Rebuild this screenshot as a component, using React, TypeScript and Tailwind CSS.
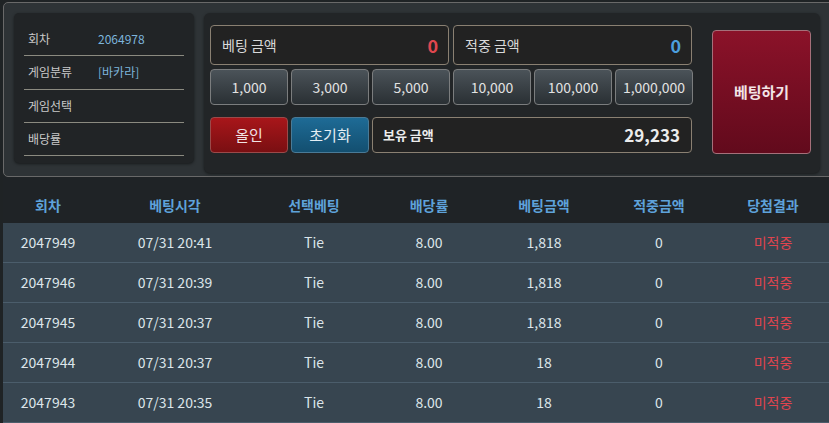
import React from "react";

const font = { fontFamily: '"Noto Sans CJK KR", "Noto Sans", sans-serif' };

const rows = [
  ["2047949", "07/31 20:41", "Tie", "8.00", "1,818", "0", "미적중"],
  ["2047946", "07/31 20:39", "Tie", "8.00", "1,818", "0", "미적중"],
  ["2047945", "07/31 20:37", "Tie", "8.00", "1,818", "0", "미적중"],
  ["2047944", "07/31 20:37", "Tie", "8.00", "18", "0", "미적중"],
  ["2047943", "07/31 20:35", "Tie", "8.00", "18", "0", "미적중"],
];

const headers = ["회차", "베팅시각", "선택베팅", "배당률", "베팅금액", "적중금액", "당첨결과"];

const chips = ["1,000", "3,000", "5,000", "10,000", "100,000", "1,000,000"];

export default function App() {
  return (
    <div className="w-[829px] h-[423px] overflow-hidden bg-[#1f2325] pt-[2px] pl-[3px]" style={font}>
      {/* top box */}
      <div className="h-[175px] w-[840px] rounded-[5px] border border-[#696969] bg-[#2e3336] pl-[10px] pt-[10px] flex gap-[10px]">
        {/* left info panel */}
        <div className="w-[180px] h-[150px] rounded-[5px] bg-[#212426] shadow-[0_1px_3px_rgba(0,0,0,0.5)] px-[10px] pt-[10px]">
          {[
            ["회차", "2064978"],
            ["게임분류", "[바카라]"],
            ["게임선택", ""],
            ["배당률", ""],
          ].map(([l, v]) => (
            <div key={l} className="h-[33.3px] border-b border-[#8b8a80] flex items-center text-[12px]">
              <span className="w-[74px] pl-[4px] text-[#c9c9c9]">{l}</span>
              <span className="text-[#7db5dc]">{v}</span>
            </div>
          ))}
        </div>
        {/* middle panel */}
        <div className="w-[616px] h-[160px] rounded-[6px] bg-[#222527] shadow-[0_1px_3px_rgba(0,0,0,0.5)] pl-[6px] pt-[12px] flex">
          <div className="w-[483px] flex flex-col">
            <div className="flex gap-[4px] h-[40px]">
              <div className="w-[239px] rounded-[4px] border border-[#8a8072] bg-[#222222] flex items-center justify-between pl-[11px] pr-[10px]">
                <span className="text-[14px] text-[#d9d9d9]">베팅 금액</span>
                <span className="text-[18px] font-bold text-[#e0474f]">0</span>
              </div>
              <div className="w-[239px] rounded-[4px] border border-[#8a8072] bg-[#222222] flex items-center justify-between pl-[11px] pr-[10px]">
                <span className="text-[14px] text-[#d9d9d9]">적중 금액</span>
                <span className="text-[18px] font-bold text-[#4c9fde]">0</span>
              </div>
            </div>
            <div className="flex gap-[3px] h-[36px] mt-[4px]">
              {chips.map((c) => (
                <div
                  key={c}
                  className="w-[78px] rounded-[4px] border border-[#7b7d7e] bg-gradient-to-b from-[#4b5359] to-[#2a3034] flex items-center justify-center text-[14px] text-[#e2e2e2]"
                >
                  {c}
                </div>
              ))}
            </div>
            <div className="flex gap-[3px] h-[36px] mt-[12px]">
              <div className="w-[78px] rounded-[4px] border border-[#9a4a4a] bg-gradient-to-b from-[#a8161a] to-[#7a0f12] flex items-center justify-center text-[15px] text-[#f0e4e4]">
                올인
              </div>
              <div className="w-[78px] rounded-[4px] border border-[#4a7a96] bg-gradient-to-b from-[#1e6b96] to-[#134f70] flex items-center justify-center text-[15px] text-[#e4eef4]">
                초기화
              </div>
              <div className="w-[320px] rounded-[4px] border border-[#8a8072] bg-[#222222] flex items-center justify-between pl-[10px] pr-[11px]">
                <span className="text-[13px] font-bold text-[#ececec]">보유 금액</span>
                <span className="text-[17px] font-bold text-[#ececec]">29,233</span>
              </div>
            </div>
          </div>
          <div className="ml-[19px] mt-[5px] w-[99px] h-[124px] rounded-[4px] border border-[#a5707a] bg-gradient-to-b from-[#8b1229] to-[#620a1c] flex items-center justify-center text-[15px] font-bold text-[#f2e4e6]">
            베팅하기
          </div>
        </div>
      </div>
      {/* table */}
      <div className="w-[826px]">
        <div className="h-[46px] pt-[10px] grid grid-cols-[90px_164px_114px_116px_114px_116px_1fr] bg-[#1f2326]">
          {headers.map((h) => (
            <div key={h} className="flex items-center justify-center text-[14px] font-bold text-[#5ea2da]">
              {h}
            </div>
          ))}
        </div>
        {rows.map((r, i) => (
          <div
            key={i}
            className="h-[40px] grid grid-cols-[90px_164px_114px_116px_114px_116px_1fr] bg-[#374550] border-b border-[#4b5d6b] text-[14px]"
          >
            {r.map((c, j) => (
              <div
                key={j}
                className={
                  "flex items-center justify-center " +
                  (j === 6 ? "text-[#e0444e]" : "text-[#dde5ea]")
                }
              >
                {c}
              </div>
            ))}
          </div>
        ))}
      </div>
    </div>
  );
}
